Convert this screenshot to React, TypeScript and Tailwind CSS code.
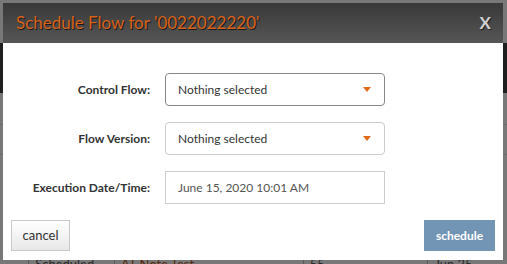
import React from "react"

const font = { fontFamily: 'Lato, "Noto Sans", sans-serif' }

const Caret = () => (
  <svg width="8" height="5" viewBox="0 0 8 5" className="shrink-0">
    <path d="M0 0 H8 L4 5 Z" fill="#e06a1b" />
  </svg>
)

const Label: React.FC<{ children: React.ReactNode }> = ({ children }) => (
  <div className="w-[147px] shrink-0 text-right text-[12px] font-bold text-[#333]">{children}</div>
)

export default function App() {
  return (
    <div className="relative h-[264px] w-[507px] overflow-hidden bg-[#787878]" style={font}>
      {/* page behind the overlay */}
      <div className="flex h-full flex-col">
        <div className="h-[43px]" />
        <div className="h-[50px] bg-[#1f1f1f]" />
        <div className="h-[32px] border-b border-[#6c6c6c]" />
        <div className="h-[30px] border-b border-[#6c6c6c]" />
        <div className="flex-1" />
        <div className="flex h-[8px] items-start text-[13px] leading-[16px] text-[#2a2a2a]">
          <div className="h-full w-[30px] border-r border-[#5a5a5a]" />
          <div className="h-full w-[88px] border-r border-[#5a5a5a] pl-[6px]">Scheduled</div>
          <div className="h-full w-[194px] border-r border-[#5a5a5a] pl-[6px] text-[#5a2a10]">AT Note Test</div>
          <div className="h-full w-[128px] border-r border-[#5a5a5a] pl-[6px]">55</div>
          <div className="h-full pl-[6px]">Jun 25, 2020</div>
        </div>
      </div>

      {/* modal */}
      <div className="absolute left-[3px] top-[3px] flex h-[257px] w-[500px] flex-col bg-white">
        <div className="flex h-[40px] items-center justify-between bg-gradient-to-b from-[#393939] to-[#565656] pl-[13px] pr-[12px]">
          <span className="text-[17px] text-[#d8621a] [text-shadow:1px_1px_0_#1a1a1a]">Schedule Flow for '0022022220'</span>
          <span className="text-[17px] font-bold text-[#d0d0d0] [text-shadow:1px_1px_0_#222]">X</span>
        </div>

        <div className="flex flex-col gap-[16px] pt-[30px]">
          <div className="flex items-center gap-[15px]">
            <Label>Control Flow:</Label>
            <div className="flex h-[33px] w-[220px] items-center justify-between rounded-[4px] border border-[#888] pl-[12px] pr-[13px] text-[12px] text-[#333]">
              <span>Nothing selected</span>
              <Caret />
            </div>
          </div>
          <div className="flex items-center gap-[15px]">
            <Label>Flow Version:</Label>
            <div className="flex h-[33px] w-[220px] items-center justify-between rounded-[4px] border border-[#ccc] pl-[12px] pr-[13px] text-[12px] text-[#333]">
              <span>Nothing selected</span>
              <Caret />
            </div>
          </div>
          <div className="flex items-center gap-[15px]">
            <Label>Execution Date/Time:</Label>
            <div className="flex h-[33px] w-[220px] items-center border border-[#ccc] pl-[12px] text-[12px] text-[#555]">
              June 15, 2020 10:01 AM
            </div>
          </div>
        </div>

        <div className="mt-[16px] flex justify-between px-[8px]">
          <button className="h-[31px] w-[59px] border border-[#c8c8c8] bg-gradient-to-b from-white to-[#e8e8e8] text-[13px] text-[#333]">
            cancel
          </button>
          <button className="h-[31px] w-[71px] bg-[#7295b5] text-[12px] font-bold text-white">schedule</button>
        </div>
      </div>
    </div>
  )
}
